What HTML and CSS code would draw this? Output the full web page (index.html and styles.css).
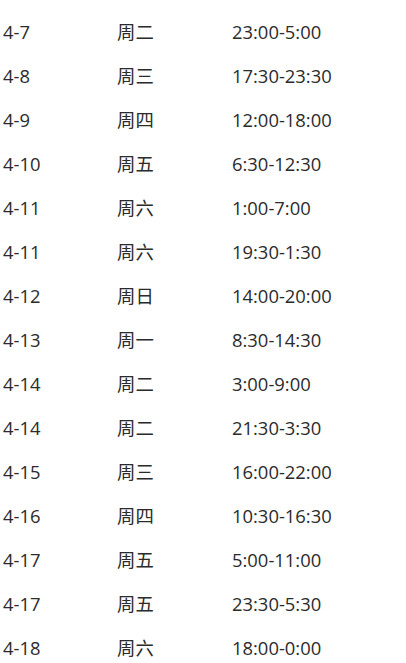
FILE: index.html
```html
<!DOCTYPE html>
<html lang="zh">
<head>
<meta charset="utf-8">
<link rel="stylesheet" href="styles.css">
</head>
<body>
<div class="list">
  <div class="row"><span class="date">4-7</span><span class="day">周二</span><span class="time">23:00-5:00</span></div>
  <div class="row"><span class="date">4-8</span><span class="day">周三</span><span class="time">17:30-23:30</span></div>
  <div class="row"><span class="date">4-9</span><span class="day">周四</span><span class="time">12:00-18:00</span></div>
  <div class="row"><span class="date">4-10</span><span class="day">周五</span><span class="time">6:30-12:30</span></div>
  <div class="row"><span class="date">4-11</span><span class="day">周六</span><span class="time">1:00-7:00</span></div>
  <div class="row"><span class="date">4-11</span><span class="day">周六</span><span class="time">19:30-1:30</span></div>
  <div class="row"><span class="date">4-12</span><span class="day">周日</span><span class="time">14:00-20:00</span></div>
  <div class="row"><span class="date">4-13</span><span class="day">周一</span><span class="time">8:30-14:30</span></div>
  <div class="row"><span class="date">4-14</span><span class="day">周二</span><span class="time">3:00-9:00</span></div>
  <div class="row"><span class="date">4-14</span><span class="day">周二</span><span class="time">21:30-3:30</span></div>
  <div class="row"><span class="date">4-15</span><span class="day">周三</span><span class="time">16:00-22:00</span></div>
  <div class="row"><span class="date">4-16</span><span class="day">周四</span><span class="time">10:30-16:30</span></div>
  <div class="row"><span class="date">4-17</span><span class="day">周五</span><span class="time">5:00-11:00</span></div>
  <div class="row"><span class="date">4-17</span><span class="day">周五</span><span class="time">23:30-5:30</span></div>
  <div class="row"><span class="date">4-18</span><span class="day">周六</span><span class="time">18:00-0:00</span></div>
</div>
</body>
</html>
```
FILE: styles.css
```css
html, body {
  margin: 0;
  padding: 0;
  background: #fff;
}
body {
  font-family: "Open Sans", "Noto Sans CJK SC", sans-serif;
  font-size: 18.4px;
  color: #2b2b2b;
}
.list {
  padding-top: 10px;
  padding-left: 3px;
}
.row {
  display: grid;
  grid-template-columns: 114px 115px 1fr;
  height: 44px;
  line-height: 44px;
}
```
